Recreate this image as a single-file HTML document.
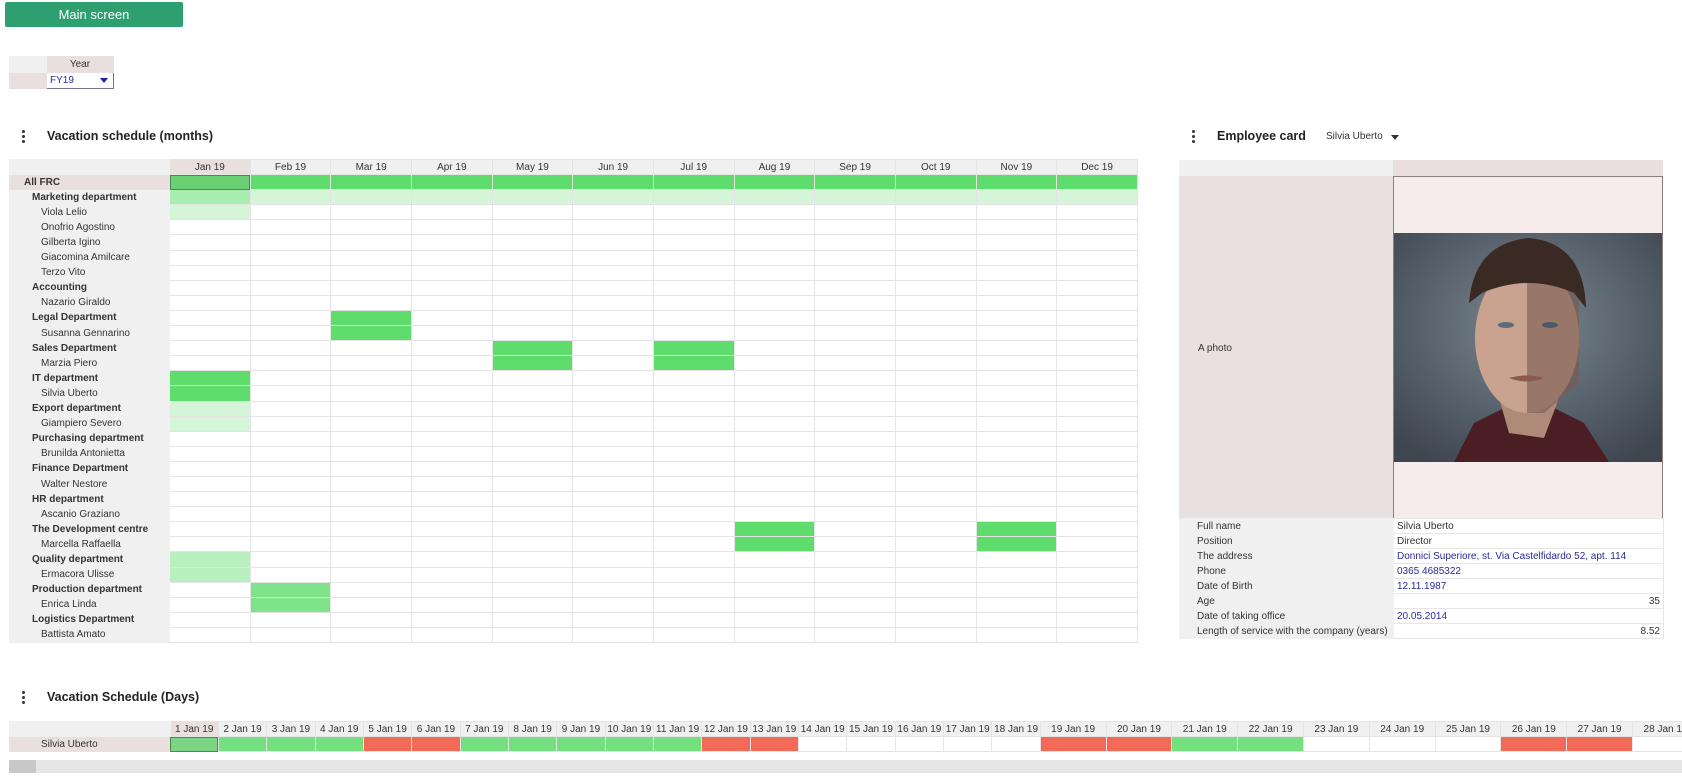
<!DOCTYPE html>
<html><head><meta charset="utf-8"><style>
*{margin:0;padding:0;box-sizing:border-box}
body{width:1682px;height:781px;background:#fff;font-family:"Liberation Sans",sans-serif;font-size:10px;color:#333;position:relative;overflow:hidden}
.abs{position:absolute}
.btn{left:5px;top:2px;width:178px;height:25px;background:#2e9f70;color:#fff;font-size:13px;text-align:center;line-height:25px;border-radius:2px}
.title{font-size:12.5px;font-weight:bold;color:#222}
.dots{width:3px}
.dots i{display:block;width:3px;height:3px;border-radius:50%;background:#333;margin-bottom:2px}
table{border-collapse:collapse;table-layout:fixed}
td{height:15px;border:1px solid #e4e4e4;white-space:nowrap;overflow:hidden;padding:0;line-height:13px}
.mt tr{height:15.1px}
.mt td.l{background:#f0f0f0;border-color:#f0f0f0}
.hd td{background:#f0f0f0;text-align:center;color:#333}
.hd td.sel{background:#e8dfde}
.g{background:#5fdd6c}.gs{background:#6bd073;outline:1px solid #4a8a50;outline-offset:-1px}
.m{background:#a8eeb0}.lt{background:#d4f5d8}.q{background:#b9f0c0}.p{background:#7fe389}
.r{background:#f36a58}.dg{background:#74e07f}
.b{font-weight:bold}
.i1{padding-left:14px}.i2{padding-left:22px}.i3{padding-left:31px}
.ct td{border-color:#e6e6e6}
.ct td.l{background:#f0f0f0;padding-left:17px;border-color:#f0f0f0}
.blue{color:#2a2a9a}
</style></head><body>
<div class="abs btn">Main screen</div>

<table class="abs" style="left:9px;top:56px;width:104px">
<col style="width:37px"><col style="width:67px">
<tr><td style="background:#f0f0f0;border-color:#f0f0f0;height:16px"></td><td style="background:#e8dfde;text-align:center;border-color:#e8dfde;height:16px">Year</td></tr>
<tr><td style="background:#e8dfde;border-color:#e8dfde;height:16px"></td><td style="border:1px solid #7a6f8a;color:#2a2a9a;padding-left:3px;height:16px;position:relative">FY19<span style="position:absolute;right:5px;top:5px;border-left:4px solid transparent;border-right:4px solid transparent;border-top:5px solid #2020a0"></span></td></tr>
</table>

<div class="abs dots" style="left:22px;top:130px"><i></i><i></i><i></i></div>
<div class="abs title" style="left:47px;top:129px">Vacation schedule (months)</div>

<table class="abs mt" style="left:9px;top:159px;width:1128px">
<col style="width:160px"><col span="12" style="width:80.67px">
<tr class="hd"><td class="l"></td><td class="sel">Jan 19</td><td>Feb 19</td><td>Mar 19</td><td>Apr 19</td><td>May 19</td><td>Jun 19</td><td>Jul 19</td><td>Aug 19</td><td>Sep 19</td><td>Oct 19</td><td>Nov 19</td><td>Dec 19</td></tr>
<tr><td class="l b i1" style="background:#e8dfde;border-color:#e8dfde">All FRC</td><td class="gs"></td><td class="g"></td><td class="g"></td><td class="g"></td><td class="g"></td><td class="g"></td><td class="g"></td><td class="g"></td><td class="g"></td><td class="g"></td><td class="g"></td><td class="g"></td></tr>
<tr><td class="l b i2">Marketing department</td><td class="m"></td><td class="lt"></td><td class="lt"></td><td class="lt"></td><td class="lt"></td><td class="lt"></td><td class="lt"></td><td class="lt"></td><td class="lt"></td><td class="lt"></td><td class="lt"></td><td class="lt"></td></tr>
<tr><td class="l i3">Viola Lelio</td><td class="lt"></td><td></td><td></td><td></td><td></td><td></td><td></td><td></td><td></td><td></td><td></td><td></td></tr>
<tr><td class="l i3">Onofrio Agostino</td><td></td><td></td><td></td><td></td><td></td><td></td><td></td><td></td><td></td><td></td><td></td><td></td></tr>
<tr><td class="l i3">Gilberta Igino</td><td></td><td></td><td></td><td></td><td></td><td></td><td></td><td></td><td></td><td></td><td></td><td></td></tr>
<tr><td class="l i3">Giacomina Amilcare</td><td></td><td></td><td></td><td></td><td></td><td></td><td></td><td></td><td></td><td></td><td></td><td></td></tr>
<tr><td class="l i3">Terzo Vito</td><td></td><td></td><td></td><td></td><td></td><td></td><td></td><td></td><td></td><td></td><td></td><td></td></tr>
<tr><td class="l b i2">Accounting</td><td></td><td></td><td></td><td></td><td></td><td></td><td></td><td></td><td></td><td></td><td></td><td></td></tr>
<tr><td class="l i3">Nazario Giraldo</td><td></td><td></td><td></td><td></td><td></td><td></td><td></td><td></td><td></td><td></td><td></td><td></td></tr>
<tr><td class="l b i2">Legal Department</td><td></td><td></td><td class="g"></td><td></td><td></td><td></td><td></td><td></td><td></td><td></td><td></td><td></td></tr>
<tr><td class="l i3">Susanna Gennarino</td><td></td><td></td><td class="g"></td><td></td><td></td><td></td><td></td><td></td><td></td><td></td><td></td><td></td></tr>
<tr><td class="l b i2">Sales Department</td><td></td><td></td><td></td><td></td><td class="g"></td><td></td><td class="g"></td><td></td><td></td><td></td><td></td><td></td></tr>
<tr><td class="l i3">Marzia Piero</td><td></td><td></td><td></td><td></td><td class="g"></td><td></td><td class="g"></td><td></td><td></td><td></td><td></td><td></td></tr>
<tr><td class="l b i2">IT department</td><td class="g"></td><td></td><td></td><td></td><td></td><td></td><td></td><td></td><td></td><td></td><td></td><td></td></tr>
<tr><td class="l i3">Silvia Uberto</td><td class="g"></td><td></td><td></td><td></td><td></td><td></td><td></td><td></td><td></td><td></td><td></td><td></td></tr>
<tr><td class="l b i2">Export department</td><td class="lt"></td><td></td><td></td><td></td><td></td><td></td><td></td><td></td><td></td><td></td><td></td><td></td></tr>
<tr><td class="l i3">Giampiero Severo</td><td class="lt"></td><td></td><td></td><td></td><td></td><td></td><td></td><td></td><td></td><td></td><td></td><td></td></tr>
<tr><td class="l b i2">Purchasing department</td><td></td><td></td><td></td><td></td><td></td><td></td><td></td><td></td><td></td><td></td><td></td><td></td></tr>
<tr><td class="l i3">Brunilda Antonietta</td><td></td><td></td><td></td><td></td><td></td><td></td><td></td><td></td><td></td><td></td><td></td><td></td></tr>
<tr><td class="l b i2">Finance Department</td><td></td><td></td><td></td><td></td><td></td><td></td><td></td><td></td><td></td><td></td><td></td><td></td></tr>
<tr><td class="l i3">Walter Nestore</td><td></td><td></td><td></td><td></td><td></td><td></td><td></td><td></td><td></td><td></td><td></td><td></td></tr>
<tr><td class="l b i2">HR department</td><td></td><td></td><td></td><td></td><td></td><td></td><td></td><td></td><td></td><td></td><td></td><td></td></tr>
<tr><td class="l i3">Ascanio Graziano</td><td></td><td></td><td></td><td></td><td></td><td></td><td></td><td></td><td></td><td></td><td></td><td></td></tr>
<tr><td class="l b i2">The Development centre</td><td></td><td></td><td></td><td></td><td></td><td></td><td></td><td class="g"></td><td></td><td></td><td class="g"></td><td></td></tr>
<tr><td class="l i3">Marcella Raffaella</td><td></td><td></td><td></td><td></td><td></td><td></td><td></td><td class="g"></td><td></td><td></td><td class="g"></td><td></td></tr>
<tr><td class="l b i2">Quality department</td><td class="q"></td><td></td><td></td><td></td><td></td><td></td><td></td><td></td><td></td><td></td><td></td><td></td></tr>
<tr><td class="l i3">Ermacora Ulisse</td><td class="q"></td><td></td><td></td><td></td><td></td><td></td><td></td><td></td><td></td><td></td><td></td><td></td></tr>
<tr><td class="l b i2">Production department</td><td></td><td class="p"></td><td></td><td></td><td></td><td></td><td></td><td></td><td></td><td></td><td></td><td></td></tr>
<tr><td class="l i3">Enrica Linda</td><td></td><td class="p"></td><td></td><td></td><td></td><td></td><td></td><td></td><td></td><td></td><td></td><td></td></tr>
<tr><td class="l b i2">Logistics Department</td><td></td><td></td><td></td><td></td><td></td><td></td><td></td><td></td><td></td><td></td><td></td><td></td></tr>
<tr><td class="l i3">Battista Amato</td><td></td><td></td><td></td><td></td><td></td><td></td><td></td><td></td><td></td><td></td><td></td><td></td></tr>
</table>

<div class="abs dots" style="left:1192px;top:130px"><i></i><i></i><i></i></div>
<div class="abs title" style="left:1217px;top:129px">Employee card</div>
<div class="abs" style="left:1326px;top:131px;font-size:10px">Silvia Uberto</div>
<div class="abs" style="left:1391px;top:135px;border-left:4px solid transparent;border-right:4px solid transparent;border-top:5px solid #333"></div>

<div class="abs" style="left:1179px;top:160px;width:214px;height:16px;background:#f0f0f0"></div>
<div class="abs" style="left:1393px;top:160px;width:270px;height:16px;background:#e8dfde"></div>
<div class="abs" style="left:1179px;top:176px;width:214px;height:342px;background:#e9e1e1"></div>
<div class="abs" style="left:1198px;top:343px">A photo</div>
<div class="abs" style="left:1393px;top:176px;width:270px;height:342px;background:#f6ecec;border-left:1px solid #8a7f7f;border-right:1px solid #8a7f7f;border-top:1px solid #8a7f7f"></div>
<svg class="abs" style="left:1394px;top:233px" width="268" height="229" viewBox="0 0 268 229">
<defs><radialGradient id="bg" cx="0.5" cy="0.4" r="0.7"><stop offset="0" stop-color="#7a8792"/><stop offset="1" stop-color="#3e4650"/></radialGradient></defs>
<rect width="268" height="229" fill="url(#bg)"/>
<path d="M60 229 L80 190 L110 175 L160 175 L190 190 L215 229Z" fill="#4a1e22"/>
<path d="M105 165 L115 200 L150 205 L165 165Z" fill="#b08a78"/>
<ellipse cx="133" cy="105" rx="52" ry="75" fill="#c9a290"/>
<path d="M133 40 L185 60 L185 150 L150 180 L133 180Z" fill="#7a5a4e" opacity="0.6"/>
<path d="M75 70 Q80 10 135 5 Q190 10 192 75 L180 60 Q135 40 88 60Z" fill="#3b2a24"/>
<ellipse cx="112" cy="92" rx="8" ry="3" fill="#5b6c78"/><ellipse cx="156" cy="92" rx="8" ry="3" fill="#4b5a66"/>
<path d="M115 145 Q133 140 150 145 Q133 152 115 145Z" fill="#8a5a50"/>
</svg>

<table class="abs ct" style="left:1179px;top:518px;width:484px">
<col style="width:214px"><col style="width:270px">
<tr><td class="l">Full name</td><td style="padding-left:3px">Silvia Uberto</td></tr>
<tr><td class="l">Position</td><td style="padding-left:3px">Director</td></tr>
<tr><td class="l">The address</td><td class="blue" style="padding-left:3px">Donnici Superiore, st. Via Castelfidardo 52, apt. 114</td></tr>
<tr><td class="l">Phone</td><td class="blue" style="padding-left:3px">0365 4685322</td></tr>
<tr><td class="l">Date of Birth</td><td class="blue" style="padding-left:3px">12.11.1987</td></tr>
<tr><td class="l">Age</td><td style="text-align:right;padding-right:3px">35</td></tr>
<tr><td class="l">Date of taking office</td><td class="blue" style="padding-left:3px">20.05.2014</td></tr>
<tr><td class="l">Length of service with the company (years)</td><td style="text-align:right;padding-right:3px">8.52</td></tr>
</table>

<div class="abs dots" style="left:22px;top:691px"><i></i><i></i><i></i></div>
<div class="abs title" style="left:47px;top:690px">Vacation Schedule (Days)</div>

<table class="abs" style="left:9px;top:721px;width:1690px">
<col style="width:160px"><col span="18" style="width:48.2px"><col span="10" style="width:65.6px">
<tr class="hd"><td style="border-color:#f0f0f0"></td><td class="sel">1 Jan 19</td><td>2 Jan 19</td><td>3 Jan 19</td><td>4 Jan 19</td><td>5 Jan 19</td><td>6 Jan 19</td><td>7 Jan 19</td><td>8 Jan 19</td><td>9 Jan 19</td><td>10 Jan 19</td><td>11 Jan 19</td><td>12 Jan 19</td><td>13 Jan 19</td><td>14 Jan 19</td><td>15 Jan 19</td><td>16 Jan 19</td><td>17 Jan 19</td><td>18 Jan 19</td><td>19 Jan 19</td><td>20 Jan 19</td><td>21 Jan 19</td><td>22 Jan 19</td><td>23 Jan 19</td><td>24 Jan 19</td><td>25 Jan 19</td><td>26 Jan 19</td><td>27 Jan 19</td><td>28 Jan 19</td></tr>
<tr><td style="background:#e8dfde;border-color:#e8dfde;padding-left:31px">Silvia Uberto</td><td class="gs" style="background:#7dd384"></td><td class="dg"></td><td class="dg"></td><td class="dg"></td><td class="r"></td><td class="r"></td><td class="dg"></td><td class="dg"></td><td class="dg"></td><td class="dg"></td><td class="dg"></td><td class="r"></td><td class="r"></td><td></td><td></td><td></td><td></td><td></td><td class="r"></td><td class="r"></td><td class="dg"></td><td class="dg"></td><td></td><td></td><td></td><td class="r"></td><td class="r"></td><td></td></tr>
</table>
<div class="abs" style="left:9px;top:760px;width:1673px;height:13px;background:#e6e6e6"></div>
<div class="abs" style="left:9px;top:760px;width:27px;height:13px;background:#c8c8c8"></div>
</body></html>
